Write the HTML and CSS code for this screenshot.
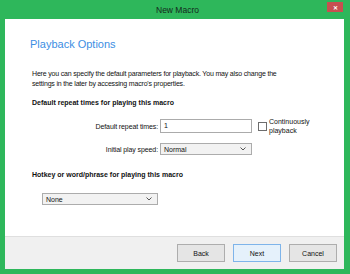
FILE: index.html
```html
<!DOCTYPE html>
<html lang="en">
<head>
    <meta charset="UTF-8">
    <title>New Macro</title>
    <link rel="stylesheet" href="styles.css">
</head>
<body>
    <div class="window">
        <div class="title-bar">
            <span class="title">New Macro</span>
            <span class="close-btn">&#x2715;</span>
        </div>
        <div class="client">
            <div class="content">
                <h1>Playback Options</h1>
                <p class="intro">Here you can specify the default parameters for playback. You may also change the<br>settings in the later by accessing macro's properties.</p>

                <h2>Default repeat times for playing this macro</h2>
                <div class="form-row first">
                    <label class="field-label">Default repeat times:</label>
                    <div class="textbox">1</div>
                    <span class="checkbox"></span>
                    <span class="check-label">Continuously<br>playback</span>
                </div>
                <div class="form-row second">
                    <label class="field-label">Initial play speed:</label>
                    <div class="combo">
                        <span>Normal</span>
                        <svg width="6" height="4" viewBox="0 0 6 4"><path d="M0.5 0.5 L3 3 L5.5 0.5" fill="none" stroke="#555" stroke-width="1"/></svg>
                    </div>
                </div>

                <h2 class="hotkey">Hotkey or word/phrase for playing this macro</h2>
                <div class="combo none-combo">
                    <span>None</span>
                    <svg width="6" height="4" viewBox="0 0 6 4"><path d="M0.5 0.5 L3 3 L5.5 0.5" fill="none" stroke="#555" stroke-width="1"/></svg>
                </div>
            </div>
            <div class="footer">
                <button>Back</button>
                <button class="default">Next</button>
                <button>Cancel</button>
            </div>
        </div>
    </div>
</body>
</html>
```

FILE: styles.css
```css
* {
    box-sizing: border-box;
    font-family: 'Liberation Sans', Arial, sans-serif;
}

body {
    margin: 0;
    background: #2eb75b;
}

.window {
    width: 350px;
    height: 274px;
    background: #2eb75b;
    padding: 0 6px 5px 5px;
    display: flex;
    flex-direction: column;
}

/* Title bar */
.title-bar {
    height: 19px;
    position: relative;
    display: flex;
    justify-content: center;
    align-items: center;
}

.title {
    font-size: 8.5px;
    color: #14291b;
    padding-left: 6px;
}

.close-btn {
    position: absolute;
    top: 2px;
    right: 1px;
    width: 16px;
    height: 10px;
    background: #c75050;
    color: #fff;
    font-size: 6px;
    font-weight: bold;
    display: flex;
    align-items: center;
    justify-content: center;
}

/* Client area */
.client {
    flex: 1;
    background: #fff;
    display: flex;
    flex-direction: column;
}

.content {
    flex: 1;
    padding: 0 20px 0 27px;
    color: #111;
}

h1 {
    margin: 18px 0 0 -2px;
    font-size: 11px;
    line-height: 14px;
    font-weight: normal;
    color: #3c8ee3;
}

.intro {
    margin: 18px 0 0;
    font-size: 7px;
    letter-spacing: -0.18px;
    line-height: 10px;
    white-space: nowrap;
}

h2 {
    margin: 9px 0 0;
    font-size: 7px;
    line-height: 10px;
    font-weight: bold;
}

.form-row {
    display: flex;
    align-items: center;
}

.form-row.first {
    margin-top: 11px;
    height: 14px;
}

.form-row.second {
    margin-top: 10px;
    height: 12px;
}

.field-label {
    width: 128px;
    text-align: right;
    padding-right: 2px;
    font-size: 7px;
    letter-spacing: -0.1px;
}

.textbox {
    width: 92px;
    height: 14px;
    border: 1px solid #ababab;
    font-size: 7px;
    line-height: 12px;
    padding-left: 3px;
}

.checkbox {
    width: 9px;
    height: 9px;
    border: 1px solid #6d6d6d;
    margin-left: 6px;
    background: #fff;
}

.check-label {
    margin-left: 2px;
    font-size: 7px;
    line-height: 9px;
}

.combo {
    width: 92px;
    height: 12px;
    border: 1px solid #acacac;
    background: #f2f2f2;
    font-size: 7px;
    display: flex;
    justify-content: space-between;
    align-items: center;
    padding: 0 5px 0 3px;
}

.hotkey {
    margin-top: 15px;
}

.none-combo {
    width: 116px;
    margin: 13px 0 0 10px;
}

/* Footer */
.footer {
    height: 33px;
    background: #f0f0f0;
    border-top: 1px solid #dfdfdf;
    display: flex;
    justify-content: flex-end;
    align-items: flex-start;
    gap: 8px;
    padding: 7px 7px 0 0;
}

.footer button {
    width: 48px;
    height: 18px;
    border: 1px solid #adadad;
    background: #e5e5e5;
    font-size: 7px;
    color: #111;
    padding: 0;
}

.footer button.default {
    border-color: #7eb4ea;
    background: #e5f1fb;
}
```
